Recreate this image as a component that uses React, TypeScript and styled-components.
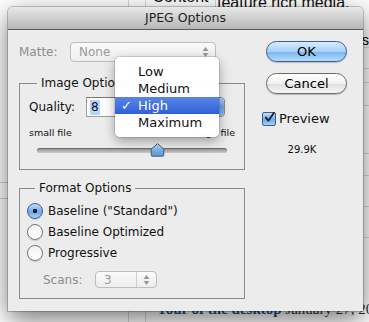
import styled, { createGlobalStyle } from "styled-components"

const GlobalStyle = createGlobalStyle`
  html, body {
    margin: 0;
    padding: 0;
    background: #ffffff;
  }
  body {
    font-family: "DejaVu Sans", "Liberation Sans", sans-serif;
    -webkit-font-smoothing: antialiased;
  }
`

const qualityLevels = ["Low", "Medium", "High", "Maximum"]
const selectedLevel = "High"

function Arrows({ color = "#6a6a6a" }: { color?: string }) {
    return (
        <svg width="7" height="12" viewBox="0 0 7 12">
            <path d="M3.5 1 L6.5 5 L0.5 5 Z" fill={color} />
            <path d="M3.5 11 L6.5 7 L0.5 7 Z" fill={color} />
        </svg>
    )
}

export default function App() {
    return (
        <Stage>
            <GlobalStyle />
            <Page>
                <ColA>
                    <RowLine $h={182} />
                    <RowLine $h={15} />
                </ColA>
                <ColB />
                <ColMain>
                    <TopRow>
                        <HeadCell>Content</HeadCell>
                        <TextCell>feature rich media.</TextCell>
                    </TopRow>
                    <SideRows>
                        <SideRow $h={37}><span>s</span></SideRow>
                        <SideRow $h={20} $line />
                        <SideRow $h={13} $line />
                        <SideRow $h={22} $line />
                        <SideRow $h={47} $line />
                        <SideRow $h={21} $line />
                        <SideRow $h={30} $line />
                        <SideRow $h={30} $line />
                        <SideRow $h={37} $line />
                    </SideRows>
                    <FootText><a>Tour of the desktop</a> January 27, 2013</FootText>
                </ColMain>
            </Page>

            <Dialog>
                <TitleBar>JPEG Options</TitleBar>
                <Body>
                    <LeftCol>
                        <MatteRow>
                            <MatteLabel>Matte:</MatteLabel>
                            <PopUp $width={146}>
                                <span>None</span>
                                <Arrows color="#9a9a9a" />
                            </PopUp>
                        </MatteRow>

                        <Group $padLeft={9}>
                            <Legend>Image Options</Legend>
                            <QualityRow>
                                <Label $width={57}>Quality:</Label>
                                <TextField><Selected>8</Selected></TextField>
                                <AquaPopUp>
                                    <span>High</span>
                                    <AquaEnd>
                                        <Arrows color="#1b2c4a" />
                                    </AquaEnd>
                                </AquaPopUp>
                            </QualityRow>
                            <SizeRow>
                                <span>small file</span>
                                <span>large file</span>
                            </SizeRow>
                            <Slider>
                                <Track />
                                <Thumb style={{ left: "63%" }}>
                                    <svg width="15" height="14" viewBox="0 0 15 14">
                                        <defs>
                                            <linearGradient id="thumb" x1="0" y1="0" x2="0" y2="1">
                                                <stop offset="0" stopColor="#cfe3f7" />
                                                <stop offset="0.5" stopColor="#7fb0e0" />
                                                <stop offset="1" stopColor="#5f95cf" />
                                            </linearGradient>
                                        </defs>
                                        <path
                                            d="M7.5 0.7 L13.8 6 L13.8 12.2 Q13.8 13.2 12.8 13.2 L2.2 13.2 Q1.2 13.2 1.2 12.2 L1.2 6 Z"
                                            fill="url(#thumb)"
                                            stroke="#3f5d82"
                                            strokeWidth="1"
                                        />
                                    </svg>
                                </Thumb>
                            </Slider>
                        </Group>

                        <Group $padLeft={7} $gap={10}>
                            <Legend>Format Options</Legend>
                            <RadioList>
                                <RadioRow><Radio $on />Baseline ("Standard")</RadioRow>
                                <RadioRow><Radio />Baseline Optimized</RadioRow>
                                <RadioRow><Radio />Progressive</RadioRow>
                            </RadioList>
                            <ScansRow>
                                <MatteLabel as="span" $width={52}>Scans:</MatteLabel>
                                <PopUp $width={62} $height={17}>
                                    <span>3</span>
                                    <StepDivider />
                                    <Arrows color="#9a9a9a" />
                                </PopUp>
                            </ScansRow>
                        </Group>
                    </LeftCol>

                    <RightCol>
                        <PushButton $primary>OK</PushButton>
                        <PushButton>Cancel</PushButton>
                        <PreviewRow>
                            <CheckBox>
                                <svg width="14" height="13" viewBox="0 0 14 13">
                                    <path d="M2.5 6.5 L5.5 10.5 L12.5 0.8" fill="none" stroke="#0d1c33" strokeWidth="2.2" strokeLinecap="round" strokeLinejoin="round" />
                                </svg>
                            </CheckBox>
                            Preview
                        </PreviewRow>
                        <FileSize>29.9K</FileSize>
                    </RightCol>
                </Body>

                <Menu>
                    {qualityLevels.map((level) => (
                        <MenuItem key={level} $active={level === selectedLevel}>
                            <Check>{level === selectedLevel ? "✓" : ""}</Check>
                            {level}
                        </MenuItem>
                    ))}
                </Menu>
            </Dialog>
        </Stage>
    )
}

const Stage = styled.div`
    position: relative;
    width: 369px;
    height: 322px;
    overflow: hidden;
    background: #ffffff;
`

const Page = styled.div`
    display: flex;
    height: 100%;
`

const ColA = styled.div`
    flex-shrink: 0;
    width: 128px;
    border-right: 1px solid #d8d8d8;
`

const RowLine = styled.div<{ $h: number }>`
    height: ${(p) => p.$h}px;
    border-bottom: 1px solid #cfcfcf;
`

const ColB = styled.div`
    flex-shrink: 0;
    width: 16px;
    border-right: 1px solid #d8d8d8;
`

const ColMain = styled.div`
    flex: 1;
    min-width: 0;
    display: flex;
    flex-direction: column;
`

const TopRow = styled.div`
    display: flex;
    height: 10px;
    font-family: "Liberation Sans", sans-serif;
    font-size: 16px;
    color: #111;
    overflow: hidden;
`

const HeadCell = styled.div`
    flex-shrink: 0;
    width: 69px;
    border-right: 1px solid #d8d8d8;
    text-align: center;
    line-height: 1;
    margin-top: -11px;
`

const TextCell = styled.div`
    padding-left: 1px;
    line-height: 1;
    margin-top: -5px;
    white-space: nowrap;
`

const SideRows = styled.div`
    flex: 1;
    display: flex;
    flex-direction: column;
    align-items: flex-end;
`

const SideRow = styled.div<{ $h: number; $line?: boolean }>`
    width: 40px;
    height: ${(p) => p.$h}px;
    border-top: ${(p) => (p.$line ? "1px solid #dcdcdc" : "none")};
    font-family: "Liberation Sans", sans-serif;
    font-size: 14px;
    text-align: right;
    line-height: 60px;
`

const FootText = styled.div`
    height: 20px;
    padding-left: 11px;
    font-family: "Liberation Serif", serif;
    font-size: 15px;
    line-height: 14px;
    color: #333;
    white-space: nowrap;
    a {
        color: #1d4f8a;
        font-weight: bold;
    }
`

const Dialog = styled.div`
    position: absolute;
    left: 8px;
    top: 7px;
    width: 355px;
    height: 304px;
    background: #ececec;
    border-radius: 5px 5px 0 0;
    box-shadow: 0 8px 26px rgba(0, 0, 0, 0.55), 0 0 0 1px rgba(0, 0, 0, 0.2);
    display: flex;
    flex-direction: column;
`

const TitleBar = styled.div`
    height: 22px;
    line-height: 22px;
    text-align: center;
    font-size: 12.5px;
    color: #1e1e1e;
    background: linear-gradient(#e8e8e8, #cfcfcf 50%, #b6b6b6);
    border-bottom: 1px solid #5a5a5a;
    border-radius: 5px 5px 0 0;
`

const Body = styled.div`
    flex: 1;
    display: flex;
    padding: 12px 16px 0 11px;
    font-size: 12px;
    color: #111;
`

const LeftCol = styled.div`
    width: 226px;
    display: flex;
    flex-direction: column;
`

const MatteRow = styled.div`
    display: flex;
    align-items: center;
    height: 20px;
`

const MatteLabel = styled.div<{ $width?: number }>`
    width: ${(p) => p.$width ?? 51}px;
    color: #8c8c8c;
    font-size: 12px;
`

const Label = styled.span<{ $width: number }>`
    width: ${(p) => p.$width}px;
    font-size: 12px;
`

const PopUp = styled.div<{ $width: number; $height?: number }>`
    box-sizing: border-box;
    width: ${(p) => p.$width}px;
    height: ${(p) => p.$height ?? 20}px;
    display: flex;
    align-items: center;
    padding: 0 6px 0 8px;
    border: 1px solid #bdbdbd;
    border-radius: 4px;
    background: linear-gradient(#fafafa, #eeeeee);
    color: #9a9a9a;
    font-size: 12px;
    span {
        flex: 1;
    }
`

const StepDivider = styled.div`
    width: 1px;
    align-self: stretch;
    background: #d0d0d0;
    margin-right: 6px;
`

const Group = styled.fieldset<{ $padLeft: number; $gap?: number }>`
    margin: ${(p) => p.$gap ?? 13}px 0 0;
    padding: 0 9px 0 ${(p) => p.$padLeft}px;
    border: 1px solid #8a8a8a;
    min-width: 0;
`

const Legend = styled.legend`
    margin-left: 8px;
    padding: 0 4px;
    font-size: 12px;
    line-height: 16px;
    color: #111;
`

const QualityRow = styled.div`
    display: flex;
    align-items: center;
    height: 20px;
    margin-top: 6px;
`

const TextField = styled.div`
    box-sizing: border-box;
    width: 40px;
    height: 20px;
    background: #fff;
    border: 1px solid #9c9c9c;
    border-top-color: #7a7a7a;
    padding: 2px 3px;
    font-size: 12px;
    display: flex;
    align-items: center;
`

const Selected = styled.span`
    background: #b5d5ff;
    padding: 0 1px;
    line-height: 15px;
`

const AquaPopUp = styled.div`
    box-sizing: border-box;
    width: 94px;
    height: 20px;
    margin-left: 5px;
    display: flex;
    align-items: center;
    border: 1px solid #8a8a8a;
    border-radius: 4px;
    background: linear-gradient(#ffffff, #ececec);
    overflow: hidden;
    span {
        flex: 1;
        padding-left: 8px;
    }
`

const AquaEnd = styled.div`
    width: 18px;
    height: 100%;
    display: flex;
    align-items: center;
    justify-content: center;
    background: linear-gradient(#b7d6f6, #6aa6e6 50%, #8fc2f3);
    border-left: 1px solid #4d77a8;
`

const SizeRow = styled.div`
    display: flex;
    justify-content: space-between;
    margin-top: 10px;
    font-size: 9.5px;
    line-height: 12px;
`

const Slider = styled.div`
    position: relative;
    height: 14px;
    margin: 4px 8px 12px;
    display: flex;
    align-items: center;
`

const Track = styled.div`
    flex: 1;
    height: 5px;
    border-radius: 3px;
    background: linear-gradient(#8f8f8f, #c9c9c9);
    box-shadow: inset 0 1px 1px rgba(0, 0, 0, 0.3);
`

const Thumb = styled.div`
    position: absolute;
    top: 0;
    width: 15px;
    height: 14px;
    margin-left: -7px;
`

const RadioList = styled.div`
    display: flex;
    flex-direction: column;
    margin-top: 4px;
`

const RadioRow = styled.div`
    display: flex;
    align-items: center;
    height: 21px;
    font-size: 12px;
    white-space: nowrap;
`

const Radio = styled.span<{ $on?: boolean }>`
    box-sizing: border-box;
    width: 16px;
    height: 16px;
    border-radius: 50%;
    margin-right: 5px;
    border: 1px solid ${(p) => (p.$on ? "#3d5f8c" : "#777")};
    background: ${(p) =>
        p.$on
            ? "radial-gradient(circle at 50% 50%, #10203a 0 2px, transparent 2.5px), linear-gradient(#c5def7, #6ea8e6 55%, #a8d0f6)"
            : "linear-gradient(#f2f2f2, #ffffff)"};
    box-shadow: 0 1px 1px rgba(0, 0, 0, 0.15);
`

const ScansRow = styled.div`
    display: flex;
    align-items: center;
    height: 17px;
    margin: 8px 0 10px 16px;
`

const RightCol = styled.div`
    width: 81px;
    margin-left: 21px;
    margin-top: -1px;
    display: flex;
    flex-direction: column;
`

const PushButton = styled.div<{ $primary?: boolean }>`
    box-sizing: border-box;
    height: 21px;
    border-radius: 11px;
    margin-bottom: 11px;
    text-align: center;
    line-height: 19px;
    font-size: 13px;
    color: #000;
    border: 1px solid ${(p) => (p.$primary ? "#3b5f8f" : "#6a6a6a")};
    background: ${(p) =>
        p.$primary
            ? "linear-gradient(#d6ebfd, #a7d1f8 50%, #78b5ee 51%, #b3dcfc)"
            : "linear-gradient(#ffffff, #f1f1f1 50%, #dedede 51%, #f6f6f6)"};
    box-shadow: 0 1px 1px rgba(0, 0, 0, 0.2);
`

const PreviewRow = styled.div`
    display: flex;
    align-items: center;
    height: 15px;
    margin: 6px 0 0 -4px;
    font-size: 13px;
    gap: 3px;
`

const CheckBox = styled.span`
    box-sizing: border-box;
    width: 14px;
    height: 14px;
    border: 1px solid #3d5f8c;
    border-radius: 2px;
    background: linear-gradient(#c5def7, #6ea8e6 55%, #a8d0f6);
    display: flex;
    align-items: center;
    justify-content: center;
    svg {
        margin-top: -2px;
        margin-left: 1px;
    }
`

const FileSize = styled.div`
    margin-top: 18px;
    padding-right: 9px;
    text-align: center;
    font-size: 10px;
    line-height: 12px;
`

const Menu = styled.div`
    position: absolute;
    left: 107px;
    top: 50px;
    width: 104px;
    padding: 6px 0;
    background: rgba(255, 255, 255, 0.98);
    border-radius: 5px;
    box-shadow: 0 4px 12px rgba(0, 0, 0, 0.35), 0 0 0 1px rgba(0, 0, 0, 0.12);
`

const MenuItem = styled.div<{ $active?: boolean }>`
    display: flex;
    align-items: center;
    height: 17px;
    font-size: 13px;
    color: ${(p) => (p.$active ? "#fff" : "#111")};
    background: ${(p) => (p.$active ? "linear-gradient(#5a83e6, #2f62d9)" : "transparent")};
`

const Check = styled.span`
    width: 23px;
    padding-left: 6px;
    box-sizing: border-box;
    font-weight: bold;
`
